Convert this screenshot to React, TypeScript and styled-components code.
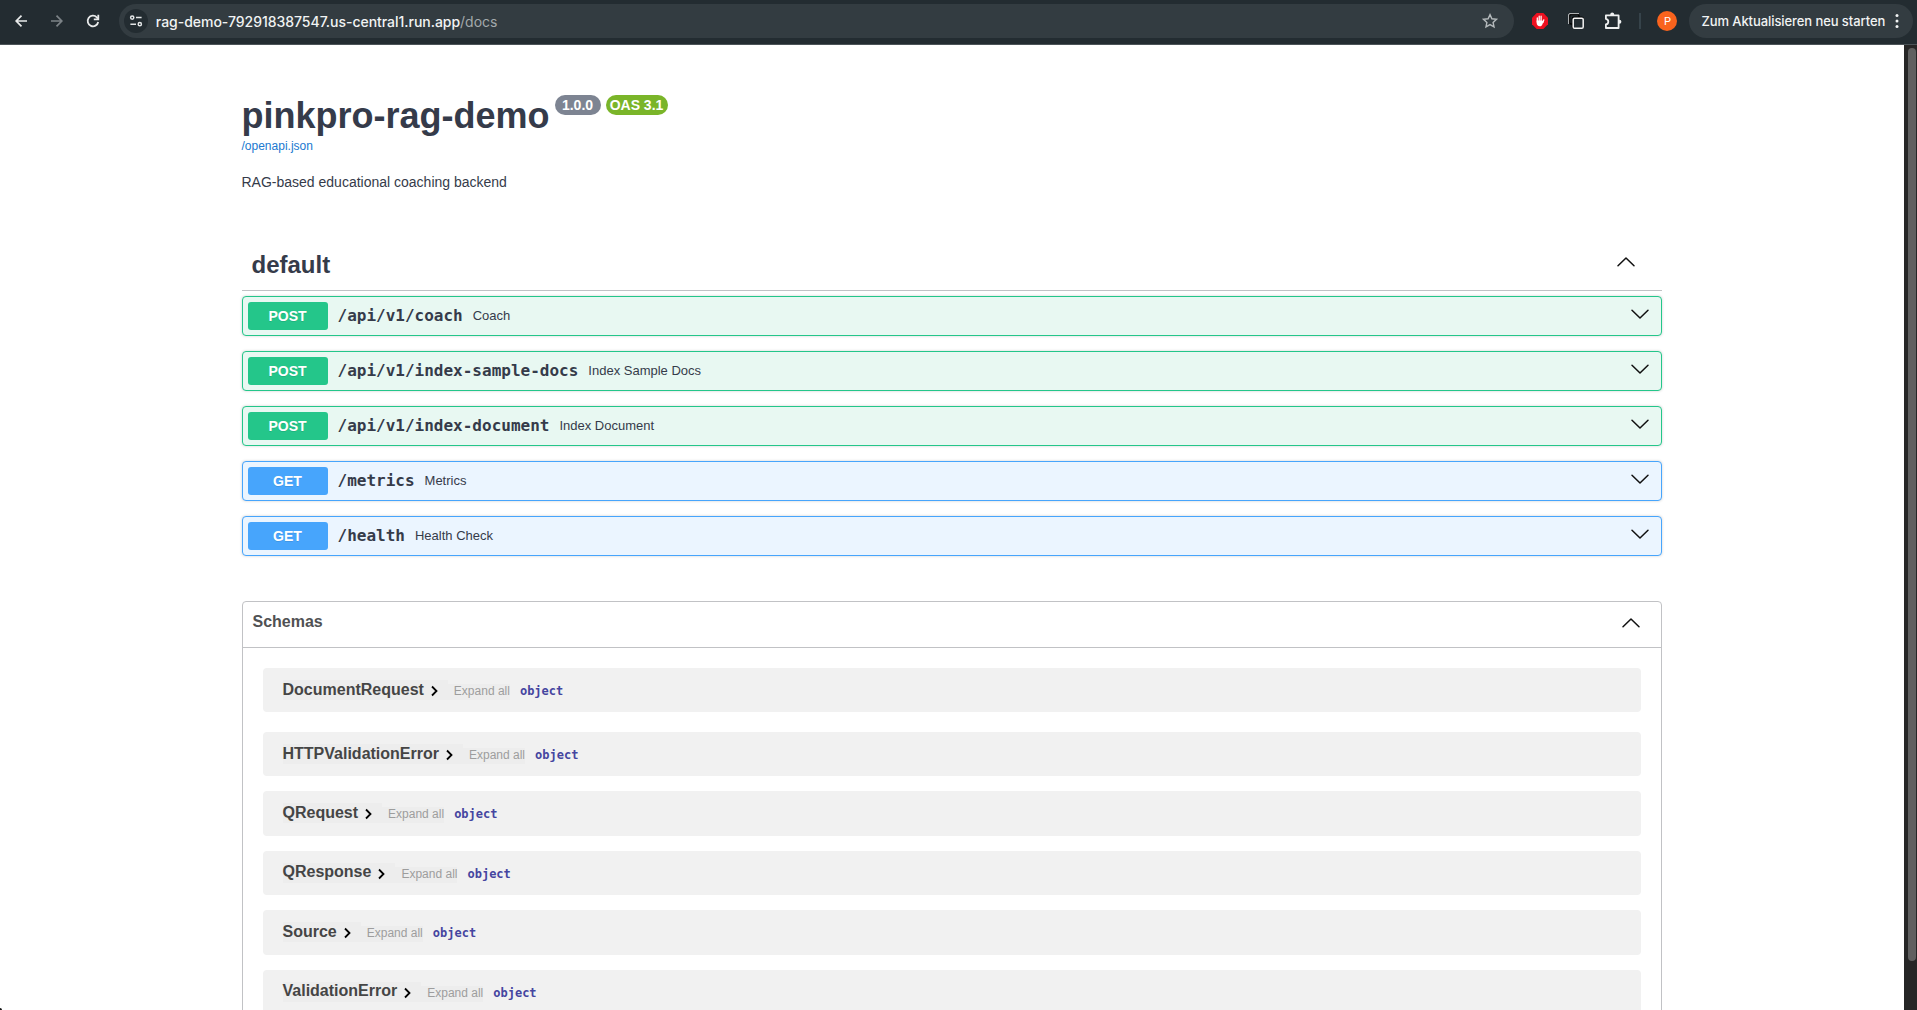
import React from "react";
import styled, { createGlobalStyle } from "styled-components";

const sans = `"Liberation Sans", Arial, sans-serif`;
const mono = `"DejaVu Sans Mono", monospace`;
const ui = `Inter, sans-serif`;

const Global = createGlobalStyle`
  * { box-sizing: border-box; }
  html, body { margin: 0; padding: 0; height: 100%; overflow: hidden; background: #fff; }
  h1, h3, h4, p { margin: 0; }
  button { border: 0; padding: 0; background: none; font: inherit; color: inherit; }
`;

const Window = styled.div`
  position: relative;
  display: flex;
  flex-direction: column;
  width: 100%;
  height: 1010px;
  overflow: hidden;
  font-family: ${sans};
  color: #353b4a;
`;

const WindowCorner = styled.span`
  position: absolute;
  left: 0;
  bottom: 0;
  width: 2px;
  height: 2px;
  border-top-right-radius: 2px;
  background: #111;
`;

/* ---------- browser toolbar ---------- */

const Toolbar = styled.header`
  display: flex;
  align-items: center;
  flex: 0 0 45px;
  height: 45px;
  padding: 0 4px 2px 9px;
  background: #232c31;
  border-bottom: 1px solid #4c5458;
  font-family: ${ui};
`;

const NavButton = styled.button<{ $dim?: boolean }>`
  display: flex;
  align-items: center;
  justify-content: center;
  width: 24px;
  height: 24px;
  margin-right: 12px;
  color: ${(p) => (p.$dim ? "#7c8387" : "#e8eaea")};
`;

const AddressBar = styled.div`
  display: flex;
  align-items: center;
  width: 1398px;
  height: 34px;
  margin-left: 2px;
  padding: 0 15px 0 5px;
  border-radius: 17px;
  background: #333c41;
`;

const SiteInfo = styled.span`
  display: flex;
  align-items: center;
  justify-content: center;
  width: 24px;
  height: 24px;
  border-radius: 50%;
  background: #232c31;
  color: #e3e6e7;
`;

const Url = styled.span`
  flex: 1;
  margin-left: 8px;
  font-size: 14px;
  font-weight: 500;
  letter-spacing: -0.03px;
  white-space: nowrap;
  color: #f1f3f3;
`;

const UrlPath = styled.span`
  font-weight: 400;
  color: #a3a9ac;
`;

const Extensions = styled.div`
  display: flex;
  align-items: center;
  margin-left: 17px;
`;

const ExtButton = styled.button`
  display: flex;
  align-items: center;
  justify-content: center;
  width: 18px;
  height: 18px;
  margin-right: 18.5px;
`;

const Separator = styled.span`
  width: 2px;
  height: 16px;
  margin-left: -1px;
  background: #36434a;
`;

const Avatar = styled.span`
  display: flex;
  align-items: center;
  justify-content: center;
  width: 20px;
  height: 20px;
  margin: 0 12px 0 16px;
  border-radius: 50%;
  background: #f9631d;
  color: #fff;
  font-family: Roboto, sans-serif;
  font-size: 11px;
`;

const UpdateButton = styled.button`
  display: flex;
  align-items: center;
  justify-content: space-between;
  width: 224px;
  height: 34px;
  margin-left: auto;
  padding: 0 14px 0 12px;
  border-radius: 17px;
  background: #333c41;
  color: #f1f3f3;
  font-size: 13px;
  font-weight: 500;
  letter-spacing: -0.08px;
  white-space: nowrap;
`;

/* ---------- page ---------- */

const Viewport = styled.div`
  display: flex;
  flex: 1;
  min-height: 0;
`;

const Page = styled.main`
  flex: 1;
  min-width: 0;
  padding: 50px 242px 0;
  overflow: hidden;
  background: #fff;
`;

const ScrollTrack = styled.div`
  flex: 0 0 13px;
  padding: 3px 1px 0 4px;
  background: #262626;
`;

const ScrollThumb = styled.div`
  height: 913px;
  border-radius: 4px;
  background: #606060;
`;

const TitleRow = styled.div`
  display: flex;
  align-items: flex-start;
  height: 43px;
`;

const Title = styled.h1`
  width: 313px;
  margin-left: -0.5px;
  font-size: 36px;
  line-height: 42px;
  font-weight: 700;
  white-space: nowrap;
`;

const Badge = styled.span<{ $bg: string; $width: number }>`
  display: flex;
  align-items: center;
  justify-content: center;
  width: ${(p) => p.$width}px;
  height: 20px;
  margin-right: 5px;
  border-radius: 57px;
  background: ${(p) => p.$bg};
  color: #fff;
  font-size: 14px;
  font-weight: 700;
  white-space: nowrap;
`;

const SpecLink = styled.a`
  display: block;
  height: 17px;
  margin-left: -0.5px;
  font-size: 12px;
  line-height: 17px;
  color: #2079d0;
`;

const Description = styled.p`
  margin: 19px 0 0 -0.5px;
  font-size: 14px;
  line-height: 16px;
`;

const TagHeader = styled.div`
  display: flex;
  align-items: center;
  justify-content: space-between;
  height: 51px;
  margin-top: 50px;
  padding: 0 26px 1px 9.5px;
  border-bottom: 1px solid #c1c2c5;
`;

const TagName = styled.h3`
  font-size: 24px;
  line-height: 28px;
  font-weight: 700;
`;

const Operations = styled.div`
  display: flex;
  flex-direction: column;
  gap: 15px;
  margin-top: 5px;
`;

const Operation = styled.div<{ $color: string; $tint: string }>`
  display: flex;
  align-items: center;
  height: 40px;
  padding: 0 11px 0 5px;
  border: 1px solid ${(p) => p.$color};
  border-radius: 4px;
  background: ${(p) => p.$tint};
  box-shadow: 0 0 3px rgba(0, 0, 0, 0.19);
`;

const Method = styled.span<{ $color: string }>`
  width: 80px;
  height: 28px;
  padding-right: 1px;
  border-radius: 3px;
  background: ${(p) => p.$color};
  color: #fff;
  font-size: 14px;
  font-weight: 700;
  line-height: 28px;
  text-align: center;
  text-shadow: 0 1px 0 rgba(0, 0, 0, 0.1);
`;

const Path = styled.span`
  padding: 0 10px 0 9.5px;
  font-family: ${mono};
  font-size: 16px;
  font-weight: 700;
  line-height: 20px;
  white-space: nowrap;
`;

const Summary = styled.span`
  flex: 1;
  padding-bottom: 2px;
  font-size: 13px;
`;

const Arrow = styled.svg<{ $shift?: number }>`
  display: block;
  width: 20px;
  height: 20px;
  margin-bottom: ${(p) => p.$shift ?? 0}px;
`;

const Models = styled.section`
  height: 460px;
  margin-top: 45px;
  border: 1px solid #c1c2c5;
  border-radius: 4px;
`;

const ModelsHeader = styled.div`
  display: flex;
  align-items: center;
  justify-content: space-between;
  height: 46px;
  padding: 0 20px 3px 9.5px;
  border-bottom: 1px solid #c1c2c5;
`;

const ModelsTitle = styled.h4`
  padding-bottom: 3px;
  font-size: 16px;
  line-height: 20px;
  font-weight: 700;
  color: #505153;
`;

const ModelList = styled.div`
  padding: 20px 20px 0;
`;

const Model = styled.div`
  display: flex;
  align-items: flex-start;
  height: 44.5px;
  margin-bottom: 15px;
  padding: 12px 20px 0 19.5px;
  border-radius: 4px;
  background: #f1f1f1;
  &:first-child { height: 44px; margin-bottom: 20px; }
  &:nth-child(2) { height: 44.3px; }
`;

const ModelToggle = styled.span`
  display: flex;
  align-items: center;
  height: 20px;
  background: #ededed;
`;

const ModelName = styled.span`
  font-size: 16px;
  line-height: 20px;
  font-weight: 700;
  color: #454545;
  padding-bottom: 1px;
`;

const ModelArrow = styled.svg`
  width: 20px;
  height: 20px;
  margin-right: 4px;
`;

const ExpandAll = styled.button`
  height: 16px;
  margin-top: 4px;
  padding: 0 0 2px 6px;
  background: #ededed;
  color: #9d9d9d;
  font-size: 12px;
  line-height: 14px;
`;

const TypeName = styled.span`
  margin: 3px 0 0 10px;
  font-family: ${mono};
  font-size: 12px;
  font-weight: 700;
  line-height: 16px;
  color: #4545a0;
`;

const COLORS = {
  POST: { color: "#24c68a", tint: "#e8f8f2" },
  GET: { color: "#47a5fc", tint: "#ebf5ff" },
} as const;

const operations: { method: keyof typeof COLORS; path: string; summary: string }[] = [
  { method: "POST", path: "/api/v1/coach", summary: "Coach" },
  { method: "POST", path: "/api/v1/index-sample-docs", summary: "Index Sample Docs" },
  { method: "POST", path: "/api/v1/index-document", summary: "Index Document" },
  { method: "GET", path: "/metrics", summary: "Metrics" },
  { method: "GET", path: "/health", summary: "Health Check" },
];

const models = ["DocumentRequest", "HTTPValidationError", "QRequest", "QResponse", "Source", "ValidationError"];

const Chevron = ({ up, shift }: { up?: boolean; shift?: number }) => (
  <Arrow viewBox="0 0 20 20" $shift={shift} fill="none" stroke="#111" strokeWidth="1.5" strokeLinecap="round" strokeLinejoin="round">
    <path d={up ? "M2 13.800 10 6l8 7.800" : "M2 6.200 10 14l8-7.800"} />
  </Arrow>
);

export default function App() {
  return (
    <Window>
      <Global />
      <Toolbar>
        <NavButton>
          <svg width="16" height="16" viewBox="0 0 16 16" fill="none" stroke="currentColor" strokeWidth="1.7">
            <path d="M14 8H3.500M8.500 2.700 3.200 8l5.300 5.300" />
          </svg>
        </NavButton>
        <NavButton $dim>
          <svg width="16" height="16" viewBox="0 0 16 16" fill="none" stroke="currentColor" strokeWidth="1.7">
            <path d="M2 8h10.500M7.500 2.700 12.800 8l-5.300 5.300" />
          </svg>
        </NavButton>
        <NavButton>
          <svg width="16" height="16" viewBox="0 0 16 16" fill="none" stroke="currentColor" strokeWidth="1.8">
            <path d="M13.2 9A5.3 5.300 0 1 1 11.800 4.300L13 5.500" />
            <path d="M13.300 1.800v4.500H8.800" />
          </svg>
        </NavButton>
        <AddressBar>
          <SiteInfo>
            <svg width="14" height="14" viewBox="0 0 14 14" fill="none" stroke="currentColor" strokeWidth="1.5">
              <circle cx="3.2" cy="3.600" r="1.600" />
              <path d="M7 3.600h5.600M1.400 10.200H7" />
              <circle cx="10.800" cy="10.200" r="1.600" />
            </svg>
          </SiteInfo>
          <Url>
            rag-demo-792918387547.us-central1.run.app<UrlPath>/docs</UrlPath>
          </Url>
          <svg width="18" height="18" viewBox="0 0 18 18" fill="none" stroke="#b5babc" strokeWidth="1.400">
            <path d="m9 2.600 1.900 4.200 4.600.5-3.400 3.100.9 4.500L9 12.600l-4 2.300.9-4.500-3.400-3.100 4.600-.5z" />
          </svg>
        </AddressBar>
        <Extensions>
          <ExtButton>
            <svg width="16" height="16" viewBox="0 0 16 16">
              <path d="M4.700 0h6.600L16 4.700v6.600L11.300 16H4.700L0 11.300V4.700z" fill="#ee1020" />
              <path d="M5.300 9V5M7.200 8V3.200M9.100 8V3.200M10.900 9.500l.9-2.700" stroke="#fff" strokeWidth="1.300" strokeLinecap="round" />
              <path d="M4.650 7.500h5.600l1.200 1.200-.9 2.200c-.5 1.500-1.300 2.400-2.800 2.400-1.900 0-3.100-1.300-3.100-3.500z" fill="#fff" />
            </svg>
          </ExtButton>
          <ExtButton>
            <svg width="16" height="16" viewBox="0 0 16 16" fill="none" strokeWidth="1.500">
              <rect x="1.500" y="1.500" width="9.500" height="9.500" rx="1.500" stroke="#000" />
              <path d="M.6 11V2Q.6.6 2 .6h9" stroke="#d0d3d4" strokeWidth=".9" />
              <rect x="4.200" y="4.200" width="11" height="11" rx="1.500" stroke="#000" strokeWidth="1.200" />
              <rect x="5.200" y="5.200" width="10" height="10" rx="1.300" stroke="#f4f4f4" fill="#232c31" />
            </svg>
          </ExtButton>
          <ExtButton>
            <svg width="18" height="18" viewBox="0 0 18 18" fill="none" stroke="#eef0f0" strokeWidth="1.800" strokeLinejoin="round">
              <path d="M1.900 3.400h12.700V16H1.900v-3.500q2.400-.5 2.400-2.800T1.900 6.900z" />
              <path d="M6.200 3.200v-.6a2 2 0 0 1 4 0v.6M14.800 7.700h.6a2 2 0 0 1 0 4h-.6" fill="#eef0f0" stroke="none" />
            </svg>
          </ExtButton>
          <Separator />
          <Avatar>P</Avatar>
        </Extensions>
        <UpdateButton>
          Zum Aktualisieren neu starten
          <svg width="4" height="16" viewBox="0 0 4 16" fill="#f1f3f3">
            <circle cx="2" cy="2.500" r="1.500" />
            <circle cx="2" cy="8" r="1.500" />
            <circle cx="2" cy="13.500" r="1.500" />
          </svg>
        </UpdateButton>
      </Toolbar>
      <Viewport>
        <Page>
          <TitleRow>
            <Title>pinkpro-rag-demo</Title>
            <Badge $bg="#7d8492" $width={46}>1.0.0</Badge>
            <Badge $bg="#7ab529" $width={62}>OAS 3.1</Badge>
          </TitleRow>
          <SpecLink>/openapi.json</SpecLink>
          <Description>RAG-based educational coaching backend</Description>
          <TagHeader>
            <TagName>default</TagName>
            <Chevron up shift={5} />
          </TagHeader>
          <Operations>
            {operations.map((op) => (
              <Operation key={op.path} $color={COLORS[op.method].color} $tint={COLORS[op.method].tint}>
                <Method $color={COLORS[op.method].color}>{op.method}</Method>
                <Path>{op.path}</Path>
                <Summary>{op.summary}</Summary>
                <Chevron shift={5} />
              </Operation>
            ))}
          </Operations>
          <Models>
            <ModelsHeader>
              <ModelsTitle>Schemas</ModelsTitle>
              <Chevron up shift={1} />
            </ModelsHeader>
            <ModelList>
              {models.map((name) => (
                <Model key={name}>
                  <ModelToggle>
                    <ModelName>{name}</ModelName>
                    <ModelArrow viewBox="0 0 20 20" fill="none" stroke="#000" strokeWidth="1.800">
                      <path d="m8 6.500 4.500 4.500L8 15.500" />
                    </ModelArrow>
                  </ModelToggle>
                  <ExpandAll>Expand all</ExpandAll>
                  <TypeName>object</TypeName>
                </Model>
              ))}
            </ModelList>
          </Models>
        </Page>
        <ScrollTrack>
          <ScrollThumb />
        </ScrollTrack>
      </Viewport>
      <WindowCorner />
    </Window>
  );
}
